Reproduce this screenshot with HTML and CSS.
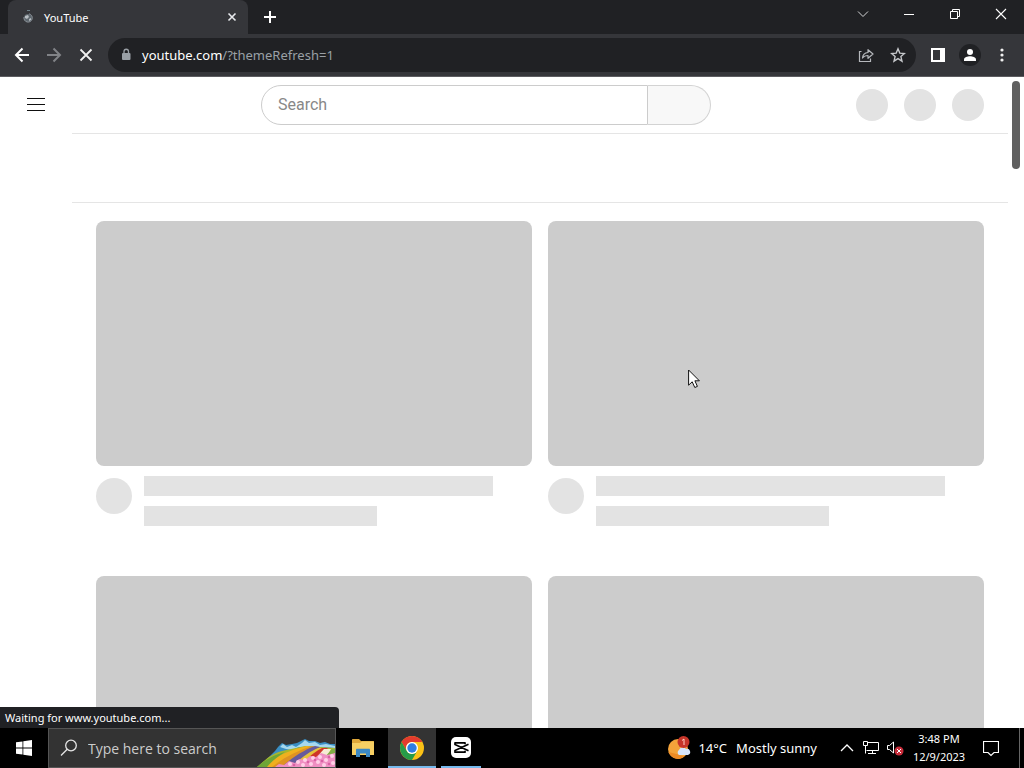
FILE: index.html
```html
<!DOCTYPE html>
<html lang="en">
<head>
<meta charset="utf-8">
<title>YouTube</title>
<link rel="stylesheet" href="styles.css">
</head>
<body>
<div class="desktop">
  <header class="tabstrip">
    <div class="tab">
      <svg class="favicon" width="12" height="16" viewBox="0 0 12 16"><circle cx="6" cy="9" r="4" fill="#5d666d"/><path d="M3 7l3-1 1 2-2 2-2-1zM7 10l2-1v2l-2 1z" fill="#b7bdc2"/><path d="M2 8a4.200 4.200 0 1 0 5-3.200" fill="none" stroke="#8b9298"/><path d="M5 1.500h3" stroke="#6f8088"/></svg>
      <span class="tab-title">YouTube</span>
      <button class="tab-close" aria-label="Close tab"><svg width="10" height="10" viewBox="0 0 10 10"><path d="M1.500 1.500l7 7M8.500 1.500l-7 7" stroke="#e8eaed" stroke-width="1.600"/></svg></button>
    </div>
    <button class="new-tab" aria-label="New tab"><svg width="14" height="14" viewBox="0 0 14 14"><path d="M7 1v12M1 7h12" stroke="#fff" stroke-width="2"/></svg></button>
    <div class="window-controls">
      <button aria-label="Search tabs"><svg width="12" height="12" viewBox="0 0 12 12" fill="none" stroke="#d4d5d7"><path d="M1 3.500l5 5 5-5"/></svg></button>
      <button aria-label="Minimize"><svg width="12" height="12" viewBox="0 0 12 12"><path d="M1 6.500h10" stroke="#fff"/></svg></button>
      <button aria-label="Restore"><svg width="12" height="12" viewBox="0 0 12 12" fill="none" stroke="#fff"><path d="M1.500 3.500h7v7h-7zM3.500 3.500v-2h7v7h-2"/></svg></button>
      <button aria-label="Close"><svg width="12" height="12" viewBox="0 0 12 12"><path d="M1 1l10 10M11 1L1 11" stroke="#fff" stroke-width="1.100"/></svg></button>
    </div>
  </header>

  <nav class="toolbar">
    <button class="tool" aria-label="Back"><svg width="16" height="16" viewBox="0 0 16 16" fill="none" stroke="#fff" stroke-width="2"><path d="M15 8H2M8.500 1.500L2 8l6.500 6.500"/></svg></button>
    <button class="tool" aria-label="Forward"><svg width="16" height="16" viewBox="0 0 16 16" fill="none" stroke="#818387" stroke-width="2"><path d="M1 8h13M7.500 1.500L14 8l-6.500 6.500"/></svg></button>
    <button class="tool" aria-label="Stop"><svg width="16" height="16" viewBox="0 0 16 16"><path d="M2.500 2.500l11 11M13.500 2.500l-11 11" stroke="#f1f1f1" stroke-width="1.800"/></svg></button>
    <div class="omnibox">
      <svg class="lock" width="10" height="14" viewBox="0 0 10 14"><rect x="1" y="5" width="8.500" height="7" rx="1" fill="#9aa0a6"/><path d="M3 5V3.500a2.200 2.200 0 0 1 4.500 0V5" fill="none" stroke="#9aa0a6" stroke-width="1.300"/></svg>
      <div class="url" role="textbox" contenteditable="true" aria-label="Address" spellcheck="false"><span class="url-host">youtube.com</span>/?themeRefresh=1</div>
      <button class="tool" aria-label="Share"><svg width="16" height="16" viewBox="0 0 16 16" fill="none" stroke="#b5b8bc" stroke-width="1.200"><path d="M3.500 4.500H1.500v10h11v-3"/><path d="M4.500 11c.3-3.500 2.300-5.300 5.500-5.500V2.700L15 7l-5 4.300V8.500c-2.400 0-4.200.7-5.500 2.500z" stroke-linejoin="round"/></svg></button>
      <button class="tool" aria-label="Bookmark"><svg width="16" height="16" viewBox="0 0 16 16"><path d="M8 1.800l1.800 4.300 4.600.4-3.500 3.100 1.100 4.600L8 11.700l-4 2.500 1.100-4.600-3.500-3.100 4.600-.4z" fill="none" stroke="#c6c8cb" stroke-width="1.400"/></svg></button>
    </div>
    <button class="tool" aria-label="Side panel"><svg width="14" height="14" viewBox="0 0 14 14"><path d="M0 0h14v14H0zM2 2v10h7V2z" fill="#fff" fill-rule="evenodd"/></svg></button>
    <button class="tool" aria-label="Profile"><svg width="22" height="22" viewBox="0 0 22 22"><circle cx="11" cy="11" r="11" fill="#202124"/><circle cx="11" cy="8" r="3" fill="#fff"/><path d="M5 17v-1.500c0-2 3.500-3.200 6-3.200s6 1.200 6 3.200V17z" fill="#fff"/></svg></button>
    <button class="tool" aria-label="Menu"><svg width="4" height="14" viewBox="0 0 4 14" fill="#f1f1f1"><circle cx="2" cy="2" r="1.600"/><circle cx="2" cy="7" r="1.600"/><circle cx="2" cy="12" r="1.600"/></svg></button>
  </nav>

  <div class="viewport">
    <div class="page">
      <header class="masthead">
        <button class="guide" aria-label="Guide"><svg width="18" height="14" viewBox="0 0 18 14"><path d="M0 .5h18M0 6.500h18M0 12.500h18" stroke="#0f0f0f"/></svg></button>
        <form class="search">
          <input class="search-input" type="text" placeholder="Search" aria-label="Search">
          <button class="search-button" type="button" aria-label="Submit search"></button>
        </form>
        <div class="masthead-end"><span class="dot"></span><span class="dot"></span><span class="dot"></span></div>
      </header>
      <main class="content">
        <div class="chips"></div>
        <div class="grid">
          <article class="card"><div class="thumb"></div><div class="details"><span class="avatar"></span><div class="lines"><div class="line-long"></div><div class="line-short"></div></div></div></article>
          <article class="card"><div class="thumb"></div><div class="details"><span class="avatar"></span><div class="lines"><div class="line-long"></div><div class="line-short"></div></div></div></article>
          <article class="card"><div class="thumb"></div></article>
          <article class="card"><div class="thumb"></div></article>
        </div>
      </main>
    </div>
    <div class="scrollbar"><div class="scroll-thumb"></div></div>
    <div class="status">Waiting for www.youtube.com...</div>
  </div>

  <footer class="taskbar">
    <button class="start" aria-label="Start"><svg width="16" height="16" viewBox="0 0 16 16" fill="#fff"><path d="M0 2.300l6.500-.9v6.100H0zM7.300 1.300L16 0v7.500H7.300zM0 8.400h6.500v6.200L0 13.700zM7.300 8.400H16V16l-8.700-1.300z"/></svg></button>
    <div class="task-search">
      <svg width="18" height="18" viewBox="0 0 18 18" fill="none" stroke="#e5e5e5" stroke-width="1.300"><circle cx="11" cy="6.500" r="5.300"/><path d="M7.200 10.300L1 16.500"/></svg>
      <input class="task-input" type="text" placeholder="Type here to search" aria-label="Type here to search">
      <svg class="scene" width="78" height="28" viewBox="0 0 78 28">
        <path d="M10 20L18 12l3-4 4-4 4 2 6-1 5-1 4-2 4-2 4 2 6 0 5 2 5-1 5 2 5 0v14z" fill="#3a8fc4"/>
        <path d="M23 8l3-3 4 3 5-2 4 2 6-4 3-3 4 3 6-1 5 3 6-1 9 2v2l-10-1-8 1-6-2-7 2-5-1-7 3-6-1z" fill="#a6d8ee"/>
        <path d="M0 28C8 21 14 15 25 12L48 7l30 2v19z" fill="#a9b62c"/>
        <path d="M8 26C18 18 32 11 50 7l5 1C42 13 30 20 22 28H6z" fill="#f0b01e"/>
        <path d="M0 28C10 19 20 15 28 13 20 18 14 23 10 28z" fill="#6da636"/>
        <path d="M15 28C26 19 40 12 55 7l4 1C46 14 36 21 29 28z" fill="#df9322"/>
        <path d="M27 26C36 18 47 11 58 7l5 1C54 13 46 19 39 26z" fill="#665a9b"/>
        <path d="M38 25C46 17 54 12 61 9l5 0C60 14 55 19 49 24z" fill="#e4c13b"/>
        <path d="M47 23C54 16 59 12 65 9l6 0C66 14 62 18 58 23z" fill="#cf3528"/>
        <path d="M57 21l10-11h7l-5 10z" fill="#f6ecd4"/><path d="M67 19l8-9h3v9z" fill="#7fae43"/>
        <path d="M18 28l4-3 5 1 5-4 6 2 4-4 6 1 5-4 6 1 5-4 6 2 8-2v14z" fill="#ef8fc2"/>
        <g fill="#ffd0e7"><circle cx="33" cy="25" r="2"/><circle cx="41" cy="23" r="2"/><circle cx="48" cy="21" r="2"/><circle cx="46" cy="26" r="2"/><circle cx="56" cy="19" r="2"/><circle cx="54" cy="25" r="2"/><circle cx="63" cy="18" r="2"/><circle cx="61" cy="23" r="2"/><circle cx="69" cy="21" r="2"/><circle cx="75" cy="17" r="2"/><circle cx="76" cy="24" r="2"/><circle cx="67" cy="26" r="2"/></g>
        <g fill="#d960a4"><circle cx="37" cy="26" r="1.300"/><circle cx="51" cy="23" r="1.300"/><circle cx="58" cy="21" r="1.300"/><circle cx="65" cy="22" r="1.300"/><circle cx="72" cy="25" r="1.300"/><circle cx="72" cy="18" r="1.300"/></g>
      </svg>
    </div>
    <div class="apps">
      <button class="app" aria-label="File Explorer"><svg width="22" height="18" viewBox="0 0 22 18"><path d="M0 1c0-.6.400-1 1-1h6l2 2h12c.6 0 1 .4 1 1v13H0z" fill="#e0a83a"/><path d="M0 4h8l2-1.500h12V16H0z" fill="#f7cf63"/><path d="M4 18v-7c0-.8.400-1.200 1-1.200h12c.6 0 1 .4 1 1.200v7h-4v-3.500H8V18z" fill="#3c89c4"/></svg></button>
      <button class="app app-active" aria-label="Google Chrome"><svg width="24" height="24" viewBox="0 0 24 24"><circle cx="12" cy="12" r="12" fill="#fbc116"/><path d="M1.610 6A12 12 0 0 1 22.390 6H12a6 6 0 0 0-5.200 9z" fill="#e33b2e"/><path d="M1.610 6A12 12 0 0 0 12 24l5.200-9A6 6 0 0 1 6.800 15z" fill="#269b48"/><circle cx="12" cy="12" r="6" fill="#fff"/><circle cx="12" cy="12" r="4.700" fill="#2f7de1"/></svg></button>
      <button class="app app-open" aria-label="CapCut"><svg width="22" height="22" viewBox="0 0 22 22"><rect x="1" y="0" width="20" height="21" rx="5" fill="#fff"/><path d="M18.500 7.300L5 13.500v1.700h10v-1.400M18.500 13.700L5 7.500V5.800h10v1.400" fill="none" stroke="#000" stroke-width="1.700" stroke-linejoin="round"/></svg></button>
    </div>
    <div class="tray">
      <button class="weather">
        <svg width="24" height="24" viewBox="0 0 24 24"><circle cx="11" cy="13" r="10" fill="#f4a33a"/><path d="M1.500 16a10 10 0 0 0 16 4.500l-6-2z" fill="#ec8a25"/><path d="M12 19a3 3 0 0 1 0-5 4 4 0 0 1 7-1 3 3 0 0 1 2 6z" fill="#d5e4fa"/><circle cx="16.500" cy="6" r="6" fill="#c73529"/><path d="M15 4.500L17 3v6" fill="none" stroke="#ffd0c5"/></svg>
        <span>14°C</span><span class="forecast">Mostly sunny</span>
      </button>
      <button class="tray-icon" aria-label="Show hidden icons"><svg width="14" height="8" viewBox="0 0 14 8"><path d="M1 7l6-6 6 6" fill="none" stroke="#fff" stroke-width="1.300"/></svg></button>
      <button class="tray-icon" aria-label="Network"><svg width="16" height="14" viewBox="0 0 16 14" fill="none" stroke="#fff"><path d="M5 1.500h10.500v8H3.500M.5.500h4v4h-4zM2.500 4.500v8M5 12.500h8M9.500 9.500v3"/></svg></button>
      <button class="tray-icon" aria-label="Volume muted"><svg width="17" height="16" viewBox="0 0 17 16"><path d="M.5 5.500h2L6.500 2v11l-4-3.500h-2z" fill="none" stroke="#fff"/><circle cx="12" cy="11" r="4.500" fill="#c82c3a"/><path d="M10 9l4 4M14 9l-4 4" stroke="#fff"/></svg></button>
      <button class="clock"><span>3:48 PM</span><span>12/9/2023</span></button>
      <button class="notifications" aria-label="Notifications"><svg width="16" height="17" viewBox="0 0 16 17"><path d="M.5 1.500h15v11h-4.500L8 15.500l-3-3H.5z" fill="none" stroke="#fff" stroke-width="1.200"/></svg></button>
      <span class="show-desktop"></span>
    </div>
  </footer>

  <svg class="cursor" width="12" height="20" viewBox="0 0 12 20"><path d="M.6 1v15.200l3.600-3.400 2.600 5.700 2.600-1.100-2.500-5.600H11.400z" fill="#fff" stroke="#111"/></svg>
</div>
</body>
</html>
```

FILE: styles.css
```css
* { box-sizing: border-box; }

body {
  margin: 0;
  font-family: "Noto Sans", "Open Sans", sans-serif;
  font-size: 11px;
}

button {
  display: flex;
  align-items: center;
  justify-content: center;
  margin: 0;
  padding: 0;
  border: 0;
  background: none;
  color: inherit;
  font: inherit;
}

input { font: inherit; outline: 0; }
svg { display: block; flex: none; }

.desktop {
  position: relative;
  display: flex;
  flex-direction: column;
  height: 100vh;
  overflow: hidden;
}

/* Browser frame */
.tabstrip {
  display: flex;
  flex: none;
  height: 34px;
  padding-left: 8px;
  background: #202124;
  color: #fff;
}

.tab {
  display: flex;
  align-items: center;
  width: 240px;
  padding: 0 10px 0 14px;
  border-radius: 8px 8px 0 0;
  background: #35363a;
}

.tab-title { flex: 1; padding-left: 10px; }
.tab-close { width: 12px; height: 16px; }
.new-tab { width: 28px; margin-left: 8px; }
.window-controls { display: flex; margin-left: auto; height: 28px; }
.window-controls button { width: 46px; }

.toolbar {
  display: flex;
  flex: none;
  align-items: center;
  height: 43px;
  padding: 0 6px;
  border-bottom: 1px solid #5c5c60;
  background: #35363a;
}

.tool { flex: none; width: 32px; height: 32px; }

.omnibox {
  display: flex;
  flex: 1;
  align-items: center;
  height: 34px;
  margin: 0 6px;
  padding: 0 2px 0 13px;
  border-radius: 17px;
  background: #202124;
}

.url {
  flex: 1;
  padding-left: 11px;
  color: #9aa0a6;
  font-size: 13px;
  white-space: nowrap;
  outline: 0;
}
.url-host { color: #fff; }

/* Web page */
.viewport {
  position: relative;
  display: flex;
  flex: 1;
  min-height: 0;
  overflow: hidden;
  background: #fff;
}

.page { flex: 1; }

.masthead {
  display: flex;
  align-items: center;
  justify-content: space-between;
  height: 56px;
  padding: 0 24px 0 16px;
}

.guide { width: 40px; height: 40px; }
.search { display: flex; width: 450px; height: 40px; margin-left: 60px; }

.search-input {
  flex: 1;
  min-width: 0;
  padding: 0 16px 2px;
  border: 1px solid #ccc;
  border-radius: 20px 0 0 20px;
  background: #fff;
  font-family: Roboto, sans-serif;
  font-size: 16px;
}
.search-input::placeholder { color: #888; opacity: 1; }

.search-button {
  width: 63px;
  border: 1px solid #d3d3d3;
  border-left: 0;
  border-radius: 0 20px 20px 0;
  background: #f8f8f8;
}

.masthead-end { display: flex; gap: 16px; }
.dot { width: 32px; height: 32px; border-radius: 50%; background: #e3e3e3; }

.content { margin-left: 72px; border-top: 1px solid #e5e5e5; }
.chips { height: 69px; border-bottom: 1px solid #e5e5e5; }

.grid {
  display: grid;
  grid-template-columns: 1fr 1fr;
  gap: 50px 16px;
  padding: 18px 24px;
}

.thumb { aspect-ratio: 16 / 9; border-radius: 8px; background: #ccc; }
.details { display: flex; gap: 12px; padding-top: 10px; }
.avatar { width: 36px; height: 36px; margin-top: 2px; border-radius: 50%; background: #e3e3e3; }
.lines { display: flex; flex: 1; flex-direction: column; gap: 10px; }
.line-long, .line-short { height: 20px; background: #e3e3e3; }
.line-long { width: 90%; }
.line-short { width: 60%; }

.scrollbar { width: 16px; padding: 4px 4px; }
.scroll-thumb { height: 88px; border-radius: 4px; background: #606060; }

.status {
  position: absolute;
  bottom: 0;
  left: 0;
  width: 339px;
  padding: 0 5px;
  border-radius: 0 4px 0 0;
  background: #202124;
  color: #fff;
  line-height: 21px;
}

/* Taskbar */
.taskbar {
  display: flex;
  flex: none;
  height: 40px;
  background: #000;
  color: #fff;
}

.start { width: 48px; }

.task-search {
  display: flex;
  align-items: center;
  width: 288px;
  padding-left: 11px;
  border: 1px solid #555;
  background: #333;
}

.task-input {
  flex: 1;
  min-width: 0;
  padding: 0 0 0 10px;
  border: 0;
  background: none;
  color: #fff;
  font-family: "Open Sans", sans-serif;
  font-size: 14px;
}
.task-input::placeholder { color: #ccc; opacity: 1; }
.scene { align-self: flex-end; }

.apps { display: flex; gap: 1px; margin-left: 3px; }
.app { width: 48px; padding-bottom: 1px; }
.app-active { background: linear-gradient(#76b9ed, #76b9ed) bottom / 48px 2px no-repeat #333; }
.app-open { background: linear-gradient(#76b9ed, #76b9ed) bottom / 40px 2px no-repeat; }

.tray { display: flex; margin-left: auto; }
.weather { padding-right: 18px; font-size: 13px; }
.weather span { margin-left: 7px; }
.weather .forecast { margin-left: 9px; }
.tray-icon { width: 24px; }
.clock {
  flex-direction: column;
  width: 64px;
  line-height: 18px;
}
.notifications { width: 40px; }
.show-desktop { width: 5px; margin-left: 8px; border-left: 1px solid #666; }

.cursor { position: absolute; top: 369px; left: 688px; }
```
